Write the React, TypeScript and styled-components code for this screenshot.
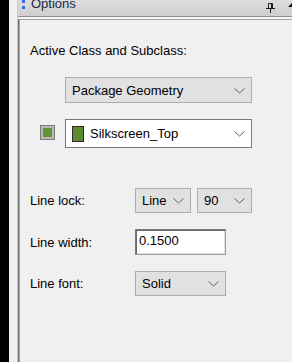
import styled, { createGlobalStyle } from 'styled-components';

const GlobalStyle = createGlobalStyle`
  html, body {
    margin: 0;
    padding: 0;
    background: #000000;
  }
  * {
    box-sizing: border-box;
  }
`;

function Chevron() {
  return (
    <svg width="11" height="6" viewBox="0 0 11 6">
      <path d="M0.5 0.5 L5.5 5 L10.5 0.5" fill="none" stroke="#5f5f5f" strokeWidth="1" />
    </svg>
  );
}

function PinIcon() {
  return (
    <svg width="9" height="10" viewBox="0 0 9 10">
      <path d="M2.5 0.5 H6.5 V5.5 H2.5 Z" fill="none" stroke="#1a1a1a" strokeWidth="1" />
      <path d="M5.5 1 V5" stroke="#1a1a1a" strokeWidth="1" />
      <path d="M0 5.5 H9" stroke="#1a1a1a" strokeWidth="1" />
      <path d="M4.5 6 V10" stroke="#1a1a1a" strokeWidth="1" />
    </svg>
  );
}

type SelectProps = {
  value: string;
  w: number;
  h: number;
  white?: boolean;
  swatch?: boolean;
};

function Dropdown({ value, w, h, white, swatch }: SelectProps) {
  return (
    <SelectBox w={w} h={h} white={white}>
      {swatch && <InnerSwatch />}
      <SelectText>{value}</SelectText>
      <ChevronWrap>
        <Chevron />
      </ChevronWrap>
    </SelectBox>
  );
}

export default function App() {
  return (
    <>
      <GlobalStyle />
      <Page>
        <BlackEdge />
        <Gutter />
        <Panel>
          <TitleBar>
            <Grip>
              <Dot />
              <Dot />
            </Grip>
            <Title>Options</Title>
            <TitleTools>
              <PinIcon />
              <UpArrow />
            </TitleTools>
          </TitleBar>
          <TitleGap />
          <Body>
            <Heading>Active Class and Subclass:</Heading>
            <ClassRow>
              <Dropdown value="Package Geometry" w={187} h={26} />
            </ClassRow>
            <SubclassRow>
              <ColorBox>
                <ColorFill />
              </ColorBox>
              <Dropdown value="Silkscreen_Top" w={187} h={29} white swatch />
            </SubclassRow>
            <Form>
              <Label>Line lock:</Label>
              <Pair>
                <Dropdown value="Line" w={56} h={25} />
                <Dropdown value="90" w={55} h={25} />
              </Pair>
              <Label>Line width:</Label>
              <TextBox>0.1500</TextBox>
              <Label>Line font:</Label>
              <Dropdown value="Solid" w={91} h={25} />
            </Form>
          </Body>
        </Panel>
      </Page>
    </>
  );
}

const Page = styled.div`
  display: flex;
  width: 292px;
  height: 362px;
  overflow: hidden;
  font-family: 'Liberation Sans', Arial, sans-serif;
  font-size: 13px;
  color: #000000;
`;

const BlackEdge = styled.div`
  width: 9px;
  background: #000000;
`;

const Gutter = styled.div`
  width: 8px;
  background: #f0f0f0;
`;

const Panel = styled.div`
  flex: 1;
  display: flex;
  flex-direction: column;
  background: #f0f0f0;
  border-left: 1px solid #c8c8c8;
  min-width: 0;
`;

const TitleBar = styled.div`
  height: 17px;
  display: flex;
  align-items: flex-start;
  padding-left: 4px;
  background: linear-gradient(#dcdcdc, #cfcfcf);
  border-bottom: 1px solid #8e8e8e;
  overflow: hidden;
`;

const Grip = styled.div`
  display: flex;
  flex-direction: column;
  gap: 3px;
  width: 3px;
`;

const Dot = styled.div`
  width: 3px;
  height: 3px;
  background: #2f6fe0;
`;

const Title = styled.div`
  margin-top: -4px;
  margin-left: 6px;
  line-height: 15px;
  color: #1b2a48;
`;

const TitleTools = styled.div`
  margin-left: auto;
  display: flex;
  align-items: flex-start;
  gap: 13px;
  padding-top: 3px;
  margin-right: -4px;
`;

const UpArrow = styled.div`
  width: 0;
  height: 0;
  margin-top: 0;
  border-left: 4px solid transparent;
  border-right: 4px solid transparent;
  border-bottom: 4px solid #111111;
`;

const TitleGap = styled.div`
  height: 2px;
  background: #f7f7f7;
`;

const Body = styled.div`
  flex: 1;
  display: flex;
  flex-direction: column;
  padding: 23px 0 0 11px;
  border-top: 1px solid #a0a0a0;
  border-left: 1px solid #6e6e6e;
  box-shadow: inset 1px 0 0 #a8a8a8;
`;

const Heading = styled.div`
  line-height: 15px;
`;

const ClassRow = styled.div`
  margin-top: 19px;
  padding-left: 35px;
`;

const SubclassRow = styled.div`
  display: flex;
  align-items: flex-start;
  margin-top: 16px;
  padding-left: 10px;
`;

const ColorBox = styled.div`
  width: 15px;
  height: 15px;
  margin-top: 6px;
  margin-right: 10px;
  border: 1px solid #7a7a7a;
  background: #b9b9b9;
  padding: 2px;
`;

const ColorFill = styled.div`
  width: 100%;
  height: 100%;
  background: #5f9634;
`;

const SelectBox = styled.div<{ w: number; h: number; white?: boolean }>`
  display: flex;
  align-items: center;
  width: ${p => p.w}px;
  height: ${p => p.h}px;
  padding: 0 6px 0 6px;
  background: ${p => (p.white ? '#ffffff' : '#e1e1e1')};
  border: 1px solid ${p => (p.white ? '#7a7a7a' : '#adadad')};
`;

const InnerSwatch = styled.div`
  width: 12px;
  height: 16px;
  margin-right: 6px;
  border: 1px solid #2a2a2a;
  background: #5b8a2f;
`;

const SelectText = styled.span`
  flex: 1;
  white-space: nowrap;
  line-height: 15px;
`;

const ChevronWrap = styled.span`
  display: flex;
  margin-top: 1px;
`;

const Form = styled.div`
  display: grid;
  grid-template-columns: 105px auto;
  justify-content: start;
  align-items: center;
  row-gap: 16px;
  margin-top: 40px;
`;

const Label = styled.div`
  line-height: 15px;
`;

const Pair = styled.div`
  display: flex;
  gap: 6px;
`;

const TextBox = styled.div`
  width: 91px;
  height: 26px;
  padding: 3px 0 0 3px;
  line-height: 15px;
  background: #ffffff;
  border-top: 1px solid #7a7a7a;
  border-left: 1px solid #7a7a7a;
  border-right: 1px solid #9a9a9a;
  border-bottom: 1px solid #9a9a9a;
  box-shadow: inset 1px 1px 0 #696969, inset -1px -1px 0 #e3e3e3;
`;
